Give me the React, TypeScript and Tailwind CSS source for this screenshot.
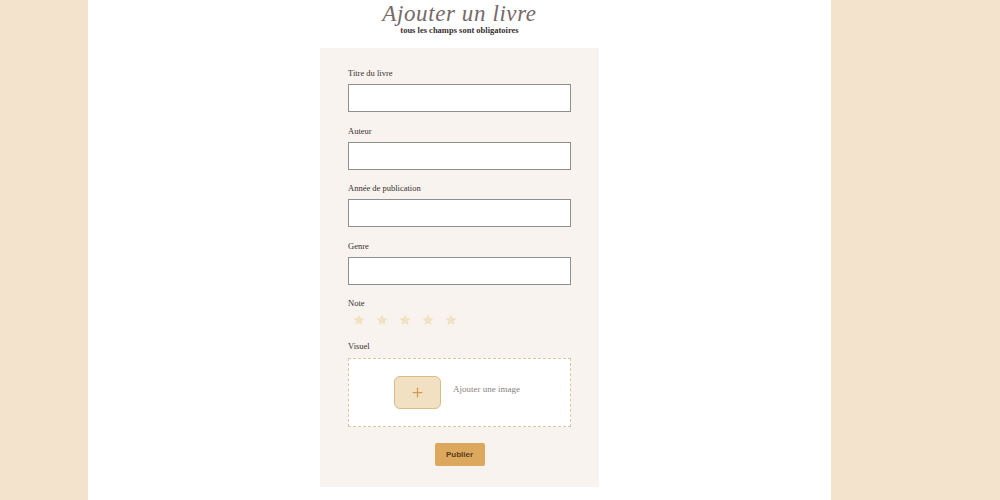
import { Plus } from 'lucide-react';

const fields = ['Titre du livre', 'Auteur', 'Année de publication', 'Genre'];

function Star() {
  return (
    <svg viewBox="0 0 24 24" className="w-[14px] h-[14px]" fill="#efe3c4">
      <path d="M12 2.5l2.9 6.2 6.6.7-4.9 4.6 1.4 6.6L12 17.3 6 20.6l1.4-6.6-4.9-4.6 6.6-.7z" />
    </svg>
  );
}

// formulaire d'ajout
export default function App() {
  return (
    <div className="min-h-[500px] bg-[#f3e3cd] font-['Liberation_Serif',serif]">
      <div className="ml-[88px] w-[743px] min-h-[500px] bg-white flex flex-col items-center">
        <h1 className="mt-[1px] text-[23px] leading-[25px] italic text-[#766969] tracking-[0.6px]">Ajouter un livre</h1>
        <p className="text-[8.5px] leading-[9px] font-bold text-[#3a3030]">tous les champs sont obligatoires</p>

        <form className="mt-[13px] w-[279px] bg-[#f8f3ee] px-[28px] pt-[20px] pb-[21px]">
          {fields.map((f) => (
            <div key={f} className="mb-[13.5px]">
              <label className="block text-[8.5px] leading-[10px] text-[#3a3030] mb-[6px]">{f}</label>
              <input type="text" className="block w-[223px] h-[28px] bg-white border border-[#8f8f8f]" />
            </div>
          ))}

          <label className="block text-[8.5px] leading-[10px] text-[#3a3030]">Note</label>
          <div className="flex gap-[9px] ml-[4px] mt-[5px]">
            <Star />
            <Star />
            <Star />
            <Star />
            <Star />
          </div>

          <label className="block mt-[14px] text-[8.5px] leading-[10px] text-[#3a3030]">Visuel</label>
          <div className="mt-[7px] w-[223px] h-[69px] bg-white border border-dashed border-[#dcc6a0] flex items-center pl-[45px]">
            <div className="w-[47px] h-[33px] rounded-[6px] bg-[#f2e0c3] border border-[#ddbb83] flex items-center justify-center">
              <Plus className="w-[15px] h-[15px] text-[#d49a4c]" strokeWidth={2} />
            </div>
            <span className="ml-[12px] -mt-[6px] text-[9px] text-[#8a8080]">Ajouter une image</span>
          </div>

          <div className="flex justify-center mt-[16px]">
            <button type="button" className="w-[50px] h-[23px] rounded-[2px] bg-[#dca85e] text-[8px] font-bold text-[#5a3d1e] font-['Liberation_Sans',sans-serif]">
              Publier
            </button>
          </div>
        </form>
      </div>
    </div>
  );
}
